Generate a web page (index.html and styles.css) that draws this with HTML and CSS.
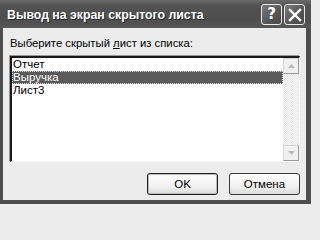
FILE: index.html
```html
<!DOCTYPE html>
<html>
<head>
<meta charset="utf-8">
<link rel="stylesheet" href="styles.css">
</head>
<body>
<div class="window">
  <div class="titlebar">
    <div class="title">Вывод на экран скрытого листа</div>
    <div class="tbtns">
      <div class="tbtn help">?</div>
      <div class="tbtn close">
        <svg width="14" height="14" viewBox="0 0 14 14"><path d="M2 2 L12 12 M12 2 L2 12" stroke="#fff" stroke-width="2.4" stroke-linecap="square"/></svg>
      </div>
    </div>
  </div>
  <div class="content">
    <div class="label">Выберите скрытый <u>л</u>ист из списка:</div>
    <div class="listbox">
      <div class="items">
        <div class="item">Отчет</div>
        <div class="item sel">Выручка</div>
        <div class="item">Лист3</div>
      </div>
      <div class="scrollbar">
        <div class="sbtn"><svg width="7" height="4" viewBox="0 0 7 4"><path d="M0 4 L3.5 0 L7 4Z" fill="#b8b8b8"/></svg></div>
        <div class="track"></div>
        <div class="sbtn"><svg width="7" height="4" viewBox="0 0 7 4"><path d="M0 0 L3.5 4 L7 0Z" fill="#b8b8b8"/></svg></div>
      </div>
    </div>
    <div class="buttons">
      <div class="btn default">OK</div>
      <div class="btn">Отмена</div>
    </div>
  </div>
</div>
</body>
</html>
```
FILE: styles.css
```css
html, body {
  margin: 0;
  padding: 0;
  background: #ececec;
}
.window {
  width: 311px;
  height: 204px;
  display: flex;
  flex-direction: column;
  background: #4e4e4e;
  box-sizing: border-box;
  font-family: "DejaVu Sans", sans-serif;
}
.titlebar {
  height: 28px;
  flex: none;
  display: flex;
  align-items: center;
  justify-content: space-between;
  padding: 0 6px 0 7px;
  background: linear-gradient(#6a6a6a 0%, #525252 20%, #4e4e4e 70%, #565656 100%);
}
.title {
  color: #fff;
  font-family: "Liberation Sans", sans-serif;
  font-weight: bold;
  font-size: 12.3px;
  transform: scaleY(1.08);
  text-shadow: 1px 1px 0 #2a2a2a;
  margin-top: 1px;
}
.tbtns {
  display: flex;
  gap: 2px;
  margin-top: 1px;
}
.tbtn {
  width: 19px;
  height: 19px;
  border: 1px solid #e8e8e8;
  border-radius: 3px;
  background: linear-gradient(135deg, #7a7a7a, #555 60%, #4a4a4a);
  display: flex;
  align-items: center;
  justify-content: center;
  color: #fff;
  font-weight: bold;
  font-size: 15px;
  line-height: 1;
}
.content {
  flex: 1;
  margin: 0 5px 4px 3px;
  background: #ececec;
  padding: 9px 6px 5px 7px;
  display: flex;
  flex-direction: column;
  font-family: "Liberation Sans", sans-serif;
  font-size: 11.3px;
  color: #000;
}
.label {
  height: 13px;
  line-height: 13px;
}
.label u {
  text-underline-offset: 1px;
}
.listbox {
  margin-top: 6px;
  height: 106px;
  box-sizing: border-box;
  border-top: 2px solid #1a1a1a;
  border-left: 2px solid #1a1a1a;
  border-right: 1px solid #f8f8f8;
  border-bottom: 1px solid #f8f8f8;
  box-shadow: -1px -1px 0 #9a9a9a;
  background: #fff;
  display: flex;
}
.items {
  flex: 1;
}
.item {
  height: 13px;
  line-height: 13px;
  padding-left: 1px;
  font-size: 11.5px;
}
.item.sel {
  background: #5a5a5a;
  color: #fff;
  outline: 1px dotted #ddd;
  outline-offset: -1px;
}
.scrollbar {
  width: 16px;
  display: flex;
  flex-direction: column;
}
.sbtn {
  height: 16px;
  box-sizing: border-box;
  border: 1px solid #d6d6d6;
  border-right-color: #9a9a9a;
  border-bottom-color: #9a9a9a;
  background: #f0f0f0;
  display: flex;
  align-items: center;
  justify-content: center;
  flex: none;
}
.track {
  flex: 1;
  background: repeating-conic-gradient(#ffffff 0 25%, #e2e2e2 0 50%) 0 0 / 2px 2px;
}
.buttons {
  margin-top: 11px;
  display: flex;
  justify-content: flex-end;
  gap: 11px;
}
.btn {
  width: 71px;
  height: 22px;
  box-sizing: border-box;
  border: 1px solid #3a3a3a;
  border-radius: 3px;
  background: linear-gradient(#fdfdfd, #f2f2f2 60%, #dcdcdc);
  display: flex;
  align-items: center;
  justify-content: center;
  font-size: 11.5px;
}
.btn.default {
  box-shadow: inset 0 0 0 1px #bdbdbd;
  border-color: #222;
}
```
